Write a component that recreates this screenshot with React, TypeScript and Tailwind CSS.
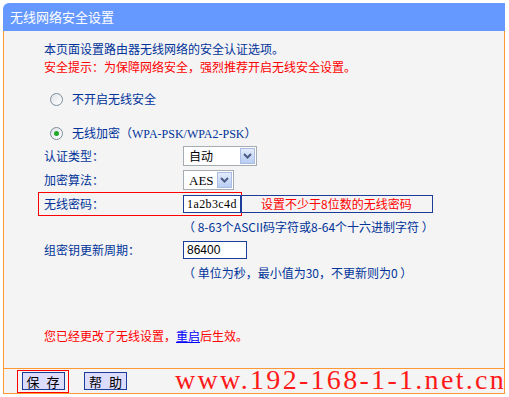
import React from "react";

const CJK = { fontFamily: '"Noto Sans CJK SC", "Noto Sans", sans-serif' };
const SERIF = { fontFamily: '"Liberation Serif", "Times New Roman", serif' };

function Radio({ checked }: { checked?: boolean }) {
  return (
    <span className="w-[13px] h-[13px] rounded-full border border-[#7d8c9b] bg-gradient-to-br from-[#dfe3e8] to-white flex items-center justify-center shrink-0">
      {checked && <span className="w-[5px] h-[5px] rounded-full bg-[#1fa82a]" />}
    </span>
  );
}

function Select({ value, width, serif }: { value: string; width: string; serif?: boolean }) {
  return (
    <div className={`${width} h-[20px] border border-[#a5acb2] bg-white flex items-center justify-between pl-[5px] pr-[1px]`}>
      <span className={`${serif ? "text-[13px]" : "text-[12px]"} text-black leading-none`} style={serif ? SERIF : CJK}>{value}</span>
      <span className="w-[15px] h-[16px] border border-[#a9bde3] bg-gradient-to-b from-[#e3ebfc] to-[#b9ccf3] flex items-center justify-center">
        <svg width="9" height="6" viewBox="0 0 9 6"><path d="M1 1l3.5 3.5L8 1" fill="none" stroke="#4a5d84" strokeWidth="2" /></svg>
      </span>
    </div>
  );
}

function Btn({ a, b }: { a: string; b: string }) {
  return (
    <button className="w-[43px] h-[18px] bg-[#dcdcfc] border border-[#1b3c98] text-[13px] leading-none text-black flex items-center justify-center gap-[7px]">
      <span>{a}</span>
      <span>{b}</span>
    </button>
  );
}

export default function App() {
  return (
    <div className="w-[509px] h-[397px] bg-white pt-[3px] pl-[3px] relative overflow-hidden" style={CJK}>
      <div className="w-[502px] flex flex-col">
        <div className="h-[28px] bg-[#6699ff] rounded-tl-[6px] text-white text-[13px] pl-[7px] flex items-center">无线网络安全设置</div>

        <div className="h-[337px] border-x border-[#ff9933] bg-[#f4f4f4] pl-[40px] pt-[9px] text-[12px] leading-[18px] text-[#003399]">
          <p>本页面设置路由器无线网络的安全认证选项。</p>
          <p className="text-[#ff0000]">安全提示：为保障网络安全，强烈推荐开启无线安全设置。</p>

          <div className="mt-[14px] h-[18px] flex items-center pl-[6px] gap-[9px]">
            <Radio />
            <span>不开启无线安全</span>
          </div>
          <div className="mt-[16px] h-[18px] flex items-center pl-[6px] gap-[9px]">
            <Radio checked />
            <span>
              无线加密（<span className="text-[12px]" style={SERIF}>WPA-PSK/WPA2-PSK</span>）
            </span>
          </div>

          <div className="mt-[2px] h-[24px] flex items-center">
            <span className="w-[139px]">认证类型：</span>
            <Select value="自动" width="w-[74px]" />
          </div>
          <div className="h-[24px] flex items-center">
            <span className="w-[139px]">加密算法：</span>
            <Select value="AES" width="w-[51px]" serif />
          </div>
          <div className="h-[24px] flex items-center">
            <div className="h-[24px] -ml-[6px] pl-[5px] border border-[#ff0000] flex items-center">
              <span className="w-[139px]">无线密码：</span>
              <div className="w-[58px] h-[18px] border border-[#1b3c98] bg-white flex items-center pl-[3px]">
                <span className="text-black text-[12px] tracking-[0.4px]" style={SERIF}>1a2b3c4d</span>
              </div>
            </div>
            <div className="-ml-px w-[192px] h-[18px] border border-[#1b3c98] flex items-center pl-[19px] text-[#ff0000]">
              设置不少于8位数的无线密码
            </div>
          </div>
          <div className="h-[22px] flex items-center pl-[139px]">（ 8-63个ASCII码字符或8-64个十六进制字符 ）</div>
          <div className="h-[24px] flex items-center">
            <span className="w-[139px]">组密钥更新周期：</span>
            <div className="w-[64px] h-[18px] border border-[#1b3c98] bg-white flex items-center pl-[3px]">
              <span className="text-black" style={{ fontFamily: '"Liberation Sans", Arial, sans-serif' }}>86400</span>
            </div>
          </div>
          <div className="h-[22px] flex items-center pl-[139px]">（ 单位为秒，最小值为30，不更新则为0 ）</div>

          <p className="mt-[43px] text-[#ff0000]">
            您已经更改了无线设置，<span className="text-[#0000ff] underline">重启</span>后生效。
          </p>
        </div>

        <div className="h-[26px] border border-[#ff9933] bg-[#f4f4f4] flex items-center pl-[13px]">
          <div className="w-[52px] h-[23px] border border-[#ff0000] flex items-center justify-center">
            <Btn a="保" b="存" />
          </div>
          <div className="ml-[15px]">
            <Btn a="帮" b="助" />
          </div>
        </div>
      </div>

      <div
        className="absolute left-[175px] top-[366px] text-[28px] leading-none tracking-[2.3px] text-[#ff1a1a] whitespace-nowrap"
        style={SERIF}
      >
        www.192-168-1-1.net.cn
      </div>
    </div>
  );
}
